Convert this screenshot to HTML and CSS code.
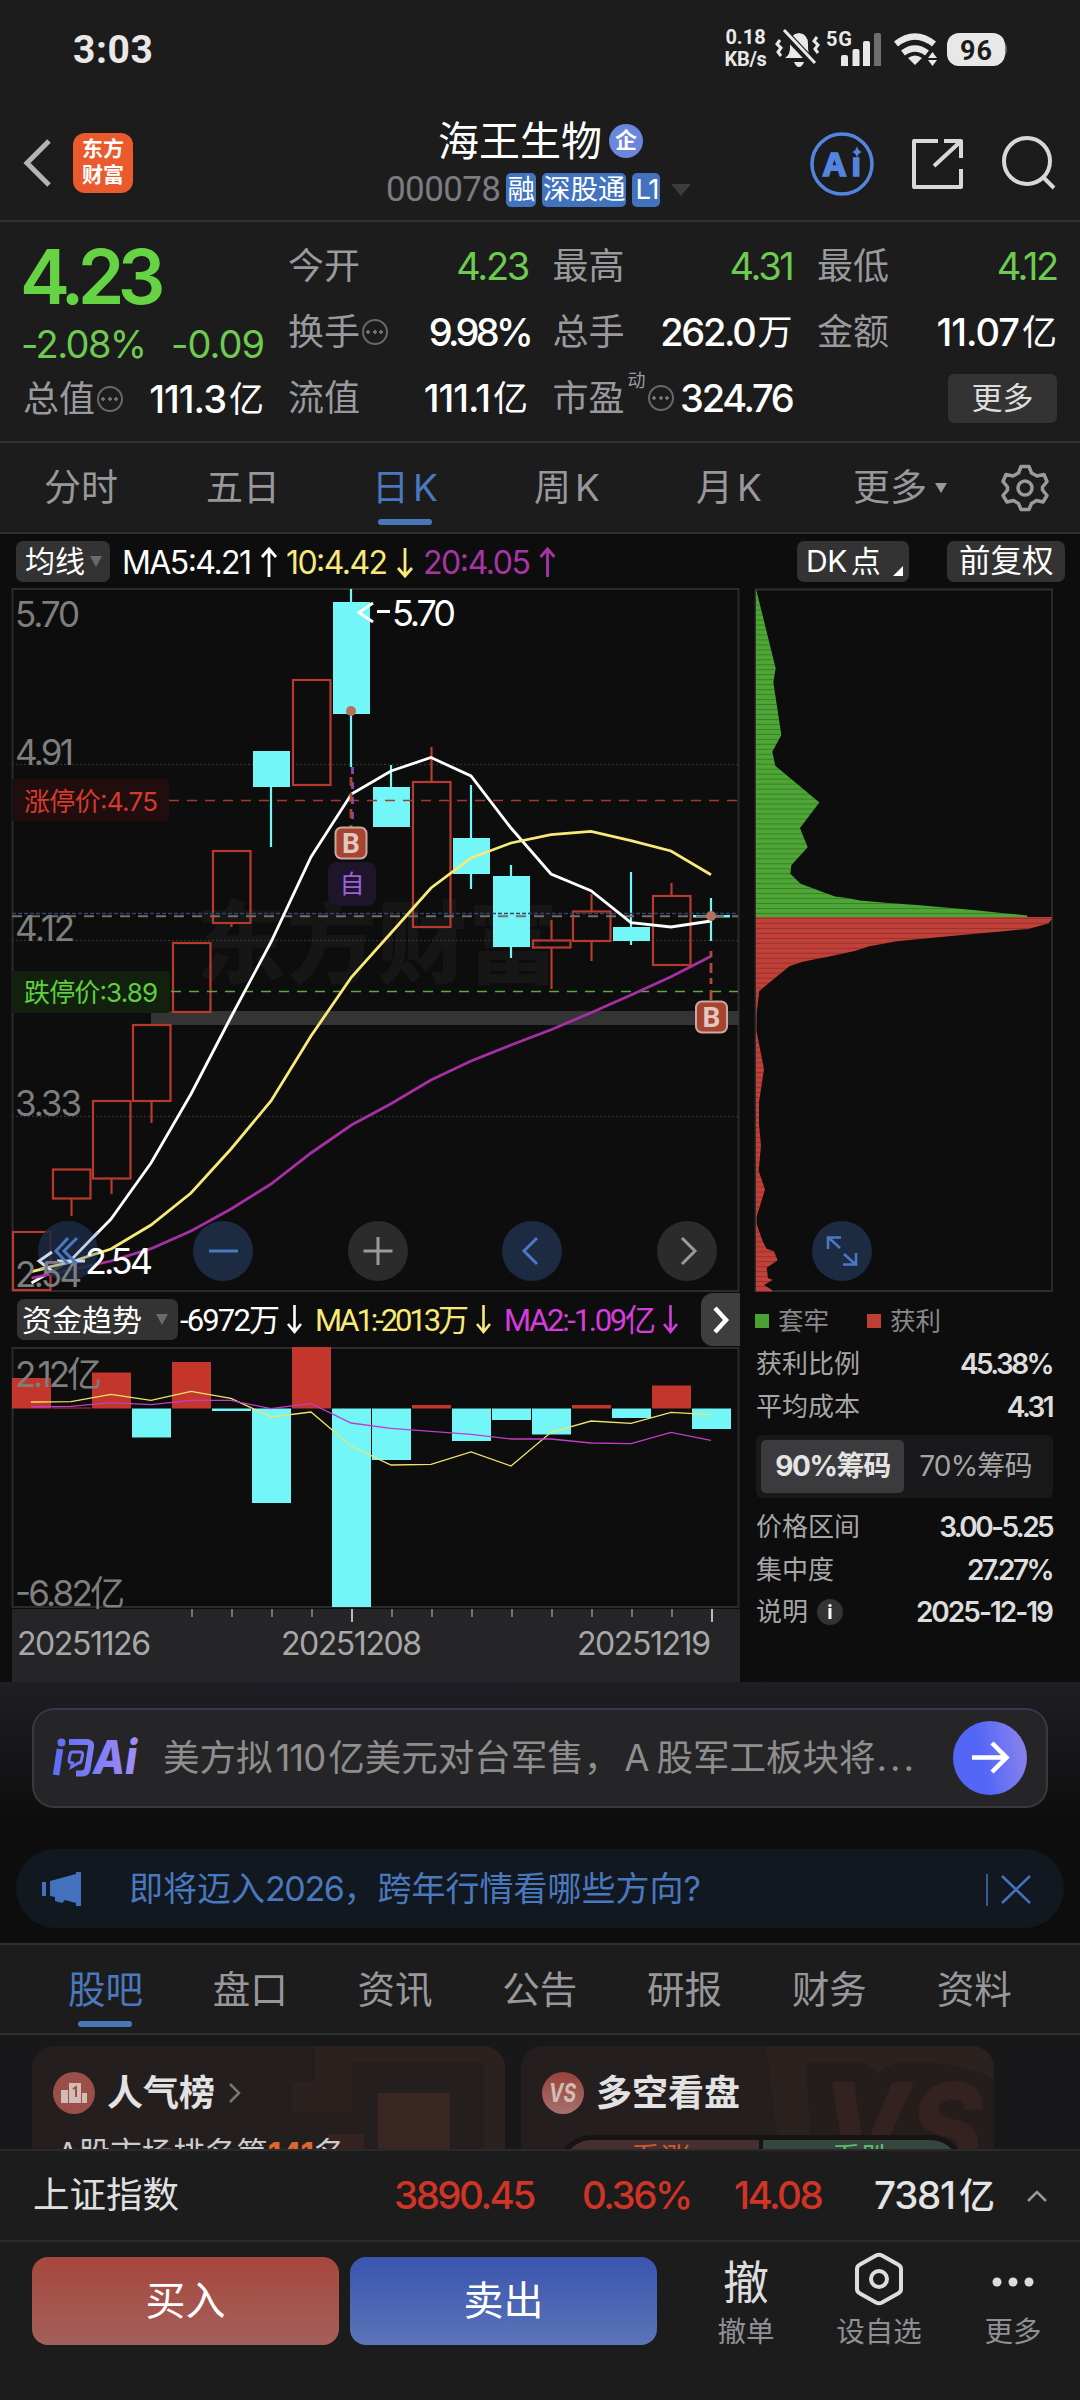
FILE: index.html
```html
<!DOCTYPE html>
<html lang="zh-CN">
<head>
<meta charset="utf-8">
<title>海王生物 000078</title>
<link rel="stylesheet" href="styles.css">
</head>
<body>
<div class="app">
  <div class="status">
    <span class="time">3:03</span>
    <span class="rate"><b>0.18</b><b>KB/s</b></span>
    <svg class="status-icons" width="290" height="44" viewBox="770 28 290 44">
      <path d="M785 58q5-3 5-10v-4q0-10 9-11q9 1 9 11v4q0 7 5 10z" fill="#e8e8e8"/>
      <path d="M794 62h10q-2 5-5 5t-5-5z" fill="#e8e8e8"/>
      <path d="M783 31L814 64" stroke="#1c1c1c" stroke-width="8"/>
      <path d="M784 30L815 63M780 40l-3 4 4 4-3 4 3 4M817 37l-3 4 4 4-3 4 3 4" stroke="#e8e8e8" stroke-width="3" fill="none"/>
      <text x="826" y="46" class="st5g" textLength="26">5G</text>
      <path d="M841 57a2 2 0 012-2h3a2 2 0 012 2v9h-7zM852.500 51a2 2 0 012-2h3a2 2 0 012 2v15h-7zM863 43a2 2 0 012-2h3a2 2 0 012 2v23h-7z" fill="#e8e8e8"/>
      <path d="M874 35a2 2 0 012-2h3a2 2 0 012 2v31h-7z" fill="#6f6f6f"/>
      <path d="M896 44q19-15 38 0" stroke="#e8e8e8" stroke-width="6.500" fill="none"/>
      <path d="M903 53q12-9 24 0" stroke="#e8e8e8" stroke-width="6.500" fill="none"/>
      <path d="M908 58q7-5 14 0l-7 7z" fill="#e8e8e8"/>
      <path d="M928 58l4.500-6 4.500 6zM928 60l4.500 6 4.500-6z" fill="#e8e8e8"/>
      <rect x="947" y="33" width="58" height="33" rx="12" fill="#e8e8e8"/>
      <path d="M1005 43q4 6 0 13z" fill="#777"/>
      <text x="960" y="60" class="batt" textLength="32">96</text>
    </svg>
  </div>

  <header class="head">
    <div class="head-left">
      <svg width="36" height="56" viewBox="20 135 36 56"><path d="M49 141L27 163l22 22" fill="none" stroke="#b4b4b4" stroke-width="5"/></svg>
      <div class="logo">东方<br>财富</div>
    </div>
    <div class="head-mid">
      <div class="name">海王生物<i class="qi">企</i></div>
      <div class="code"><span>000078</span><em>融</em><em>深股通</em><em>L1</em><i class="tri"></i></div>
    </div>
    <svg class="head-icons" width="260" height="72" viewBox="804 127 260 72" fill="none" stroke="#d8d8d8" stroke-width="4">
      <circle cx="842" cy="163" r="30" stroke="#5384df" stroke-width="3.500"/>
      <text x="823" y="175" class="ai" textLength="38">Aı</text>
      <path d="M857 145q1 5 5 6q-4 1-5 6q-1-5-5-6q4-1 5-6z" fill="#5384df" stroke="none"/>
      <path d="M938 140H914V186H961V168M944 140H961V157M934 165L960 141" stroke-linejoin="round"/>
      <circle cx="1027" cy="160" r="23"/><path d="M1043 176l11 11"/>
    </svg>
  </header>

  <section class="quote">
    <div class="q-left">
      <div class="price">4.23</div>
      <div class="chg"><span>-2.08%</span><span class="c2">-0.09</span></div>
      <div class="cell"><label>总值<i class="dots"></i></label><b class="wd">111.3<u>亿</u></b></div>
    </div>
    <div class="q-grid">
      <div class="cell"><label>今开</label><b class="g">4.23</b></div>
      <div class="cell"><label>最高</label><b class="g">4.31</b></div>
      <div class="cell"><label>最低</label><b class="g">4.12</b></div>
      <div class="cell"><label>换手<i class="dots"></i></label><b class="t">9.98%</b></div>
      <div class="cell"><label>总手</label><b>262.0<u>万</u></b></div>
      <div class="cell"><label>金额</label><b class="wd">11.07<u>亿</u></b></div>
      <div class="cell"><label>流值</label><b class="wd">111.1<u>亿</u></b></div>
      <div class="cell"><label>市盈<sup>动</sup><i class="dots"></i></label><b>324.76</b></div>
      <div class="cell end"><span class="more">更多</span></div>
    </div>
  </section>

  <nav class="ktabs">
    <span>分时</span><span>五日</span><span class="on">日<k>K</k></span><span>周<k>K</k></span><span>月<k>K</k></span><span class="mo">更多<i class="tri s"></i></span>
    <svg width="50" height="50" viewBox="-25 -25 50 50" fill="none" stroke="#9a9a9a" stroke-width="3.500" stroke-linejoin="round"><path d="M-4-21.500H4L6.500-15L12-12L19-13.500L22-6.500L17.500-1V2L22 7.500L18 14L11.500 12.500L6.500 15.500L4 21.500H-4L-6.500 15.500L-11.500 12.500L-18 14L-22 7.500L-17.500 2V-1L-22-6.500L-19-13.500L-12-12L-6.500-15Z"/><circle r="7"/></svg>
  </nav>

  <section class="charts">
    <div class="col-k">
      <div class="ma-row">
        <span class="btn">均线<i class="tri m"></i></span>
        <svg width="440" height="54" viewBox="120 534 440 54" fill="none" stroke-width="2.800">
          <text x="122" y="574" class="ma w" textLength="130">MA5:4.21</text><path d="M269 577V549M262 557l7-8 7 8" stroke="#fff"/>
          <text x="286" y="574" class="ma y" textLength="102">10:4.42</text><path d="M405 548V576M398 568l7 8 7-8" stroke="#f8ea78"/>
          <text x="423" y="574" class="ma p" textLength="108">20:4.05</text><path d="M547.500 577V549M540.500 557l7-8 7 8" stroke="#a835a8"/>
        </svg>
      </div>
      <svg class="kchart" width="740" height="704" viewBox="0 588 740 704">
        <text x="196" y="976" class="wm" textLength="362">东方财富</text>
        <path d="M12.500 1291V589H738.500V1291Z" fill="none" stroke="#2b2b2b" stroke-width="2"/>
        <path d="M12 764.500H738M12 940.500H738M12 1116.500H738" stroke="#303030" stroke-width="1.500" stroke-dasharray="2 2"/>
        <rect x="151" y="1011" width="588" height="14" fill="#343434"/>
        <g class="red-c">
          <path d="M31.500 1289v2M71.500 1199v17M111.500 1179v15M151.500 1101v22M231.500 923v4M431.500 782v-35M551.500 940v-20M551.500 948v41M591.500 911v-17M591.500 941v20M671.500 896v-13"/>
          <rect x="13" y="1232" width="37.500" height="58"/><rect x="53" y="1169.500" width="37.500" height="29"/><rect x="93" y="1101" width="37.500" height="77.500"/><rect x="133" y="1025" width="37.500" height="76"/><rect x="173" y="943" width="37.500" height="69"/><rect x="213" y="851" width="37.500" height="72"/><rect x="293" y="680" width="37.500" height="105"/><rect x="413" y="782" width="37.500" height="145"/><rect x="533" y="940.500" width="37.500" height="7"/><rect x="573" y="911.500" width="37.500" height="29.500"/><rect x="653" y="896" width="37.500" height="69"/>
        </g>
        <g class="cy-c">
          <path d="M271 787v60M351 589v178M391 765v30M471 785v104M511 865v93M631 872v73M711 898v43"/>
          <rect x="253" y="751" width="37" height="36"/><rect x="333" y="602" width="37" height="112"/><rect x="373" y="787" width="37" height="40"/><rect x="453" y="838" width="37" height="36"/><rect x="493" y="876" width="37" height="71"/><rect x="613" y="927" width="37" height="14"/><rect x="693" y="915" width="37" height="2.500"/>
        </g>
        <path d="M12 913.500H738" stroke="#2f4668" stroke-width="1.500" stroke-dasharray="4 2"/>
        <path d="M12 916.300H738" stroke="#7b6b60" stroke-width="2" stroke-dasharray="10 8"/>
        <path d="M169 800.500H738" stroke="#a83a2f" stroke-width="1.500" stroke-dasharray="10 8"/>
        <path d="M171 991.500H738" stroke="#5aa83e" stroke-width="1.500" stroke-dasharray="10 8"/>
        <text x="15" y="627" class="ax" textLength="65">5.70</text><text x="15" y="765" class="ax" textLength="59">4.91</text><text x="15" y="941" class="ax" textLength="60">4.12</text><text x="15" y="1116" class="ax" textLength="67">3.33</text>
        <path d="M12 779h153q4 0 4 4v34q0 4-4 4H12z" fill="#200e0e"/><text x="24" y="811" class="lim" fill="#d63a2c" textLength="134">涨停价:4.75</text>
        <path d="M12 971h154q4 0 4 4v34q0 4-4 4H12z" fill="#12200e"/><text x="24" y="1002" class="lim" fill="#5fcf3f" textLength="134">跌停价:3.89</text>
        <g fill="none" stroke-width="2.800">
          <polyline stroke="#fff" points="31.500,1283 71,1260 111,1219 151,1163 191,1094 231,1017 271,942 311,857 351.500,794 391,771 431,757.500 471,776 511,828 551,874 591,890.700 631,922.700 671,927 711,921"/>
          <polyline stroke="#f8ea78" points="31.500,1271.700 71,1262 111,1249 151,1225 191,1193 231,1149 271,1101 311,1036 351.500,977 391,933 431,888 471,858 511,843 551,834.700 591,831.300 631,840.700 671,851 711,874.700"/>
          <polyline stroke="#a62fa6" points="31.500,1278 71,1270 111,1261 151,1248.700 191,1231 231,1209 271,1184 311,1153 351.500,1125 391,1103.700 431,1080 471,1061 511,1045 551,1029.700 591,1012.700 631,995 671,976.700 711,956.300"/>
          <path d="M352.500 767V827" stroke="#8848b8" stroke-dasharray="7 8"/><path d="M351 777V827" stroke="#a84432" stroke-dasharray="9 7"/><path d="M711 951V1001" stroke="#b8493a" stroke-dasharray="6 6 10 5"/>
        </g>
        <circle cx="351" cy="711" r="5" fill="#b5705f"/><circle cx="711" cy="916" r="5" fill="#b5705f"/>
        <rect x="335.500" y="827.500" width="31" height="31" rx="6" fill="#a8432f" stroke="#c7aaa2" stroke-width="2"/><text x="351" y="853" class="b">B</text>
        <rect x="696" y="1001.500" width="31" height="31" rx="6" fill="#a8432f" stroke="#c7aaa2" stroke-width="2"/><text x="711.500" y="1027" class="b">B</text>
        <rect x="328" y="862" width="48" height="44" rx="9" fill="#1e152a"/><text x="352" y="893" class="zi">自</text>
        <path d="M373 603L359 612.500L373 622M377 611.500h13" fill="none" stroke="#fff" stroke-width="3"/><text x="392" y="626" class="an" textLength="64">5.70</text>
        <g fill-opacity=".86"><circle cx="68" cy="1251" r="30" fill="#1c2a42"/></g><circle cx="223" cy="1251" r="30" fill="#1c2a42"/><circle cx="378" cy="1251" r="30" fill="#2b2b2b"/><circle cx="532" cy="1251" r="30" fill="#1c2a42"/><circle cx="687" cy="1251" r="30" fill="#2b2b2b"/>
        <g stroke-width="2.600" fill="none"><path d="M71 1260L98 1232" stroke="#c3d0e6"/><path d="M40 1269L71 1262L98 1253" stroke="#b9c08e"/></g>
        <path d="M52 1252L39 1261L52 1271M57 1261h28" fill="none" stroke="#cdd8ee" stroke-width="3"/>
        <text x="15" y="1287" class="ax" textLength="67">2.54</text><text x="85" y="1274" class="an" textLength="68">2.54</text>
        <g fill="none" stroke="#4a78c4" stroke-width="3"><path d="M68 1238L56 1251L68 1264M77 1238L64 1251L77 1264M209 1251H238M537 1238L524 1251L537 1264"/></g>
        <g fill="none" stroke="#9a9a9a" stroke-width="3"><path d="M363.500 1251h29M378 1237v28M682 1238L695 1251L682 1264"/></g>
      </svg>
      <div class="fund-row">
        <span class="btn">资金趋势<i class="tri m"></i></span>
        <svg width="520" height="56" viewBox="180 1292 520 56" fill="none" stroke-width="2.600">
          <text x="180" y="1331" class="fd w" textLength="100">-6972万</text><path d="M294.500 1305V1332M288 1324l6.500 8 6.500-8" stroke="#fff"/>
          <text x="315" y="1331" class="fd y" textLength="154">MA1:-2013万</text><path d="M483.500 1305V1332M477 1324l6.500 8 6.500-8" stroke="#f8ea78"/>
          <text x="504" y="1331" class="fd m" textLength="152">MA2:-1.09亿</text><path d="M670.500 1305V1332M664 1324l6.500 8 6.500-8" stroke="#d43ddb"/>
        </svg>
        <span class="next"><svg width="20" height="30" viewBox="0 0 20 30"><path d="M4 3L15 15L4 27" fill="none" stroke="#fff" stroke-width="4.500"/></svg></span>
      </div>
      <svg class="fchart" width="740" height="335" viewBox="0 1347 740 335">
        <path d="M12.500 1607V1348H738.500V1607Z" fill="none" stroke="#2b2b2b" stroke-width="2"/>
        <path fill="#c4352b" d="M12 1378h39v30.500h-39zM52 1407.500h39v1h-39zM92 1372.500h39v36h-39zM172 1362h39v46.500h-39zM292 1347h39v61.500h-39zM412 1405h39v3.500h-39zM572 1405h39v3.500h-39zM652 1385.500h39v23h-39z"/>
        <path fill="#72f6f8" d="M132 1408.500h39v29h-39zM212 1408.500h39v2.500h-39zM252 1408.500h39v94.500h-39zM332 1408.500h39v198.500h-39zM372 1408.500h39v51.500h-39zM452 1408.500h39v32.500h-39zM492 1408.500h39v11.500h-39zM532 1408.500h39v26h-39zM612 1408.500h39v9.500h-39zM692 1408.500h39v20.500h-39z"/>
        <text x="15" y="1387" class="ax" textLength="87">2.12亿</text><text x="15" y="1606" class="ax" textLength="110">-6.82亿</text>
        <polyline fill="none" stroke="#efe46a" stroke-width="1.300" points="31,1402 71,1401.700 111,1394.300 151,1400.300 191,1391.300 231,1398.300 271,1417 311,1412 351,1446 391,1465 431,1464.300 471,1452 511,1466 551,1432.300 591,1421 631,1423.300 671,1412.300 711,1414.700"/>
        <polyline fill="none" stroke="#c23cc9" stroke-width="1.300" points="31,1407 71,1406.300 111,1402.700 151,1404.700 191,1400.300 231,1400.300 271,1408.700 311,1403.300 351,1423 391,1428.300 431,1431.300 471,1434.300 511,1439 551,1439 591,1443 631,1443.700 671,1432.300 711,1440.300"/>
        <rect x="12" y="1609" width="728" height="73" fill="#252527"/>
        <path d="M192 1609v8M232 1609v8M272 1609v8M312 1609v8M392 1609v8M432 1609v8M472 1609v8M512 1609v8M552 1609v8M592 1609v8M632 1609v8M672 1609v8" stroke="#8c8c8c" stroke-width="1.500"/><path d="M352 1609v13M712 1609v13" stroke="#bbb" stroke-width="2"/>
        <text x="17" y="1655" class="dt" textLength="134">20251126</text><text x="281" y="1655" class="dt" textLength="141">20251208</text><text x="577" y="1655" class="dt" textLength="134">20251219</text>
      </svg>
    </div>
    <div class="col-chip">
      <div class="dk-row"><span class="btn dk">DK<u>点</u><i class="corner"></i></span><span class="btn fq">前复权</span></div>
      <svg width="340" height="704" viewBox="740 588 340 704">
        <defs><pattern id="st" width="3" height="10" patternUnits="userSpaceOnUse"><path d="M0 1H3" stroke="#000" stroke-opacity=".28" stroke-width="2"/></pattern>
        <path id="gr" d="M48 138L107 298L100 326L124 432L97 466L106 494L238 568L180 619L203 658L154 694L151 711L182 731L240 746L285 757L322 760L360 765L445 770L530 774L615 779L700 784L785 790L862 795V799H48Z"/>
        <path id="rd" d="M48 798H935V803L925 811L865 822L785 827L706 832L627 837L548 842L470 847L430 852L388 857L347 866L306 872L265 878L225 883L188 888L148 897L58 947L50 990L49 1025L72 1104L57 1170V1215L63 1258L56 1308L75 1346L50 1400V1415L68 1450L80 1465L102 1470L113 1488L80 1503L84 1524L98 1528L72 1538L96 1548V1551H48Z"/></defs>
        <path d="M755.500 1291V589.500H1052V1291Z" fill="none" stroke="#2e2e2e" stroke-width="1.800"/>
        <g transform="translate(740 520) scale(.33333 .49744)"><use href="#gr" fill="#4ea636"/><use href="#rd" fill="#c1413a"/><use href="#gr" fill="url(#st)"/><use href="#rd" fill="url(#st)"/></g>
        <circle cx="842" cy="1251" r="30" fill="#1c2a42"/>
        <path d="M840 1248L829 1238M828 1249V1237.500H841M844 1254L855 1264M843 1264.500H856V1253" fill="none" stroke="#4a78c4" stroke-width="2.600"/>
      </svg>
      <div class="chip">
        <div class="lg"><i></i>套牢<i class="r"></i>获利</div>
        <div class="row"><span>获利比例</span><b>45.38%</b></div>
        <div class="row"><span>平均成本</span><b>4.31</b></div>
        <div class="seg"><span class="on">90%筹码</span><span>70%筹码</span></div>
        <div class="row"><span>价格区间</span><b>3.00-5.25</b></div>
        <div class="row"><span>集中度</span><b>27.27%</b></div>
        <div class="row"><span>说明<i class="info">i</i></span><b class="date">2025-12-19</b></div>
      </div>
    </div>
  </section>

  <section class="ask">
    <div class="askbox">
      <svg width="88" height="44" viewBox="52 1737 88 44">
        <defs><linearGradient id="ag" x1="52" x2="140" y1="0" y2="0" gradientUnits="userSpaceOnUse"><stop offset="0" stop-color="#5a6cf5"/><stop offset="1" stop-color="#a58ef5"/></linearGradient></defs>
        <g fill="none" stroke="url(#ag)" stroke-width="6"><path d="M60 1750L56 1776" stroke-width="6.500"/><path d="M69 1743H86q6 0 5 5L87.500 1770q-1 4.500-6 4.500H76"/><path d="M71 1753h9q3 0 2.500 3l-1 5q-.5 3-3 3l-7 4 1-4q-4 0-3.500-3l1-5q.5-3 2-3z" stroke-width="3"/></g><circle cx="61.500" cy="1743.500" r="4" fill="url(#ag)"/>
        <text x="93" y="1775" class="wen" textLength="44" lengthAdjust="spacingAndGlyphs" fill="url(#ag)">Ai</text>
      </svg>
      <span class="q">美方拟<l>110</l>亿美元对台军售，<l class="a">A</l>股军工板块将<l class="e">...</l></span>
      <span class="go"><svg width="40" height="40" viewBox="0 0 40 40"><path d="M2 19.500H36M22 5L36.500 19.500L22 34" fill="none" stroke="#fff" stroke-width="4.500"/></svg></span>
    </div>
    <div class="tip">
      <svg width="42" height="36" viewBox="41 1871 42 36" fill="#4272bd"><path d="M42 1882h4v14h-4zM50 1881L76 1874V1872H81V1906H76V1903L65 1900L62 1903L55 1901V1897L50 1896Z"/></svg>
      <span>即将迈入<l>2026</l>，跨年行情看哪些方向?</span>
      <svg width="50" height="34" viewBox="984 1871 50 34" fill="none" stroke="#4272bd"><path d="M987 1873v32" stroke-width="1.500"/><path d="M1002 1875L1030 1902M1030 1875L1002 1902" stroke-width="2.600"/></svg>
    </div>
  </section>

  <nav class="tabs"><span class="on">股吧</span><span>盘口</span><span>资讯</span><span>公告</span><span>研报</span><span>财务</span><span>资料</span></nav>

  <section class="cards">
    <div class="card">
      <svg class="bg" width="473" height="103" viewBox="0 0 473 103"><path d="M283 0H473V103H452V16H320V66H260V36H283Z" fill="#2b211f"/><path d="M346 47H418V103H346Z" fill="#3a2623"/><path d="M296 88h36v15h-36z" fill="#33221f"/></svg>
      <div class="ct"><svg width="42" height="42" viewBox="0 0 42 42"><circle cx="21" cy="21" r="21" fill="#9c4f49"/><path d="M8 18h7v13H8zM16 11h12v20H16zM29 21h5v10h-5z" fill="#d2bcb8"/><path d="M20 17l3-2v10" fill="none" stroke="#9c4f49" stroke-width="2"/></svg><b>人气榜</b><svg width="16" height="24" viewBox="0 0 16 24"><path d="M3 3l9 9-9 9" fill="none" stroke="#777" stroke-width="2.500"/></svg></div>
      <p><l>A</l>股市场排名第<em>141</em>名</p>
    </div>
    <div class="card">
      <svg class="bg" width="473" height="103" viewBox="0 0 473 103"><path d="M245 0H473V103H258Z" fill="#2b211f"/><path d="M285 16H344L357 27Q372 14 400 16Q450 18 473 34V103H290Z" fill="#251c1c"/><text x="300" y="128" class="vs" textLength="162" lengthAdjust="spacingAndGlyphs">VS</text></svg>
      <div class="ct"><svg width="42" height="42" viewBox="0 0 42 42"><defs><linearGradient id="vg" x2="0" y2="1"><stop stop-color="#97423b"/><stop offset="1" stop-color="#a8716c"/></linearGradient></defs><circle cx="21" cy="21" r="21" fill="url(#vg)"/><text x="7" y="30" class="vss" textLength="27" lengthAdjust="spacingAndGlyphs">VS</text></svg><b>多空看盘</b></div>
      <div class="pill"><span>看涨</span><span>看跌</span></div>
    </div>
  </section>

  <div class="index"><span>上证指数</span><b class="r1">3890.45</b><b class="r2">0.36%</b><b class="r3">14.08</b><b class="wv">7381<u>亿</u></b><svg width="22" height="14" viewBox="0 0 22 14"><path d="M2 12L11 3L20 12" fill="none" stroke="#999" stroke-width="2.500"/></svg></div>
  <footer class="foot">
    <span class="buy">买入</span><span class="sell">卖出</span>
    <div class="act a1"><i>撤</i><s>撤单</s></div>
    <div class="act a2"><svg width="52" height="54" viewBox="-26 -27 52 54" fill="none" stroke="#ddd" stroke-width="4"><path d="M-3-23.500Q0-25 3-23.500L19-14.500Q22-13 22-10V10Q22 13 19 14.500L3 23.500Q0 25-3 23.500L-19 14.500Q-22 13-22 10V-10Q-22-13-19-14.500Z"/><circle r="8"/></svg><s>设自选</s></div>
    <div class="act a3"><svg width="52" height="54" viewBox="-26 -27 52 54" fill="#ddd"><circle cx="-16" cy="3" r="4.500"/><circle cy="3" r="4.500"/><circle cx="16" cy="3" r="4.500"/></svg><s>更多</s></div>
  </footer>
</div>
</body>
</html>
```
FILE: styles.css
```css
* { box-sizing: border-box; }
body { margin: 0; background: #0d0d0d; }
.app { width: 1080px; height: 2400px; overflow: hidden; display: flex; flex-direction: column; background: #1c1c1c; color: #fff; font-family: Inter, "Noto Sans CJK SC", sans-serif; line-height: 1; }
i, em, s, u { font-style: normal; text-decoration: none; }
svg { display: block; flex: none; }
.app > * { flex: none; }

.status { height: 100px; display: flex; align-items: center; padding-left: 73px; color: #e8e8e8; }
.time { width: 648px; font: 700 39px/1 Roboto; letter-spacing: .6px; }
.rate { width: 49px; display: flex; flex-direction: column; align-items: center; gap: 2px; margin-top: -4px; }
.rate b { font: 700 20px/20px Roboto; }
.rate b:last-child { letter-spacing: -.3px; }
.st5g { font: 700 20px Roboto; fill: #e8e8e8; }
.batt { font: 700 27px Roboto; fill: #1c1c1c; }

.head { height: 122px; padding: 8px 16px 0 20px; display: flex; align-items: center; border-bottom: 2px solid #303030; }
.head-left { width: 366px; display: flex; align-items: center; gap: 17px; margin-top: -3px; }
.logo { width: 60px; height: 60px; border-radius: 12px; background: #ea5a2c; font-size: 21px; font-weight: 700; line-height: 26px; text-align: center; padding-top: 3px; }
.head-mid { width: 310px; margin-top: -8px; }
.head-icons { margin-left: auto; }
.name { display: flex; align-items: center; gap: 7px; font-size: 41px; line-height: 56px; padding-left: 52px; }
.qi { width: 34px; height: 34px; border-radius: 50%; background: #6a86dd; font-size: 22px; font-weight: 700; line-height: 33px; text-align: center; }
.code { display: flex; align-items: center; gap: 6px; height: 36px; margin-top: 3px; white-space: nowrap; }
.code > * { flex: none; }
.code span { font: 35px/36px Roboto; color: #7c7c80; letter-spacing: -.6px; }
.code em { height: 34px; border-radius: 5px; background: #4273bf; font-size: 27.500px; line-height: 32px; padding: 0 1px; }
.code em:nth-of-type(3) { letter-spacing: -1.500px; padding: 0 2px 0 3px; }
.tri { width: 0; height: 0; border: 10px solid transparent; border-top: 12px solid #3c3c3c; border-bottom: 0; margin-left: 5px; }
.tri.s { border-width: 10px 6.500px 0; border-top-color: #9a9a9a; margin-left: 8px; }
.tri.m { border-width: 11px 6px 0; border-top-color: #6a6a6a; margin-left: 5px; }
.ai { font: 700 33px "Noto Sans"; fill: #5384df; stroke: #5384df; stroke-width: 1.500; }

.quote { height: 221px; display: flex; padding: 11px 22px 0 23px; border-bottom: 2px solid #303030; }
.q-left { width: 265px; }
.price { height: 88px; font-size: 75px; font-weight: 600; line-height: 88px; color: #66d344; letter-spacing: -6.800px; margin-left: -3px; }
.chg { height: 45px; width: 243px; display: flex; justify-content: space-between; color: #6ccb50; font-size: 38px; line-height: 46px; letter-spacing: -1.600px; margin-left: -2px; }
.chg .c2 { letter-spacing: -1px; }
.q-left .cell { height: 66px; width: 241px; }
.q-grid { display: grid; grid-template-columns: 240px 240px 240px; column-gap: 24.500px; grid-template-rows: 66px 66px 66px; }
.cell { display: flex; align-items: center; justify-content: space-between; }
.cell label { display: flex; align-items: center; gap: 2px; font-size: 36px; color: #9a9a9e; }
.cell label sup { font-size: 18px; align-self: flex-start; margin: -8px 0 0 1px; line-height: 1; }
.cell b { display: flex; align-items: center; font-weight: 500; font-size: 38px; letter-spacing: -2.300px; }
.cell b.t { letter-spacing: -3.700px; margin-right: -2px; }
.cell b.wd { letter-spacing: -1px; }
.cell b.g { color: #6ccb50; font-weight: 400; }
.cell u { font-size: 35px; font-weight: 400; letter-spacing: 0; margin-left: 3px; }
.cell.end { justify-content: flex-end; }
.more { width: 109px; height: 49px; border-radius: 6px; background: #333; color: #ddd; font-size: 31px; line-height: 47px; text-align: center; }
.dots { width: 26px; height: 26px; border: 2.500px solid #68686a; border-radius: 50%; background: radial-gradient(circle, #77777a 1.500px, transparent 2px) 50% 50% / 6px 6px no-repeat, radial-gradient(circle, #77777a 1.500px, transparent 2px) 1px 50% / 6px 6px no-repeat, radial-gradient(circle, #77777a 1.500px, transparent 2px) 14px 50% / 6px 6px no-repeat; }

.ktabs { height: 91px; display: flex; align-items: center; border-bottom: 2px solid #303030; font-size: 37px; color: #98989c; }
.ktabs span { width: 162px; display: flex; justify-content: center; align-items: center; height: 89px; position: relative; }
.ktabs span.mo { width: 180px; }
.ktabs svg { margin-left: 10px; }
.ktabs k { margin-left: 4px; }
.on { color: #4a78bf; }
.ktabs .on::after, .tabs .on::after { content: ""; position: absolute; bottom: 7px; left: 50%; margin-left: -27px; width: 54px; height: 6px; border-radius: 3px; background: #4a76bc; }

.charts { height: 1148px; background: #0d0d0d; display: flex; }
.col-k { width: 740px; }
.col-chip { width: 340px; }
.ma-row { height: 54px; display: flex; align-items: center; padding-left: 16px; }
.btn { display: flex; align-items: center; background: #333; border-radius: 7px; height: 41px; font-size: 30px; padding-left: 9px; }
.ma-row .btn { width: 94px; margin-right: 10px; }
.ma { font: 32px Inter; }
.w { fill: #fff; } .y { fill: #f8ea78; } .p { fill: #a835a8; } .m { fill: #d43ddb; }
.wm { font: 900 90px "Noto Sans CJK SC"; fill: #161616; }
.red-c { fill: none; stroke: #b63a2e; stroke-width: 2.200; }
.cy-c path { stroke: #72f6f8; stroke-width: 2.200; }
.cy-c rect { fill: #72f6f8; }
.ax { font: 35px Inter, "Noto Sans CJK SC"; fill: #7e7e7e; }
.an { font: 36px Inter; fill: #fff; }
.lim { font: 26px Inter, "Noto Sans CJK SC"; }
.b { font: 700 28px Roboto; fill: #e0c8c2; text-anchor: middle; }
.zi { font: 25px "Noto Sans CJK SC"; fill: #9a62dd; text-anchor: middle; }
.fund-row { height: 55px; display: flex; align-items: center; padding-left: 17px; }
.fund-row .btn { width: 161px; padding-left: 5px; margin-right: 2px; }
.fund-row .tri { margin-left: 14px; }
.fd { font: 31px Roboto, "Noto Sans CJK SC"; }
.next { width: 39px; height: 53px; margin-left: 1px; border-radius: 12px 0 0 12px; background: #3e3e3e; display: flex; align-items: center; justify-content: center; }
.dt { font: 32px Inter; fill: #a8a8a8; }
.dk-row { height: 54px; display: flex; align-items: center; padding-left: 57px; gap: 38px; }
.dk { width: 112px; position: relative; font-size: 30px; letter-spacing: -.5px; }
.dk u { margin-left: 4px; }
.fq { width: 118px; padding-left: 12px; font-size: 31.500px; }
.corner { position: absolute; right: 6px; bottom: 6px; border: 5.500px solid transparent; border-right-color: #fff; border-bottom-color: #fff; }

.chip { padding: 7px 27px 0 15px; color: #a6a6a6; font-size: 26px; }
.lg { height: 44px; display: flex; align-items: center; font-size: 25.500px; color: #88888c; }
.lg i { width: 14px; height: 14px; background: #4ba033; margin-right: 9px; }
.lg i.r { background: #bd3f36; margin-left: 38px; }
.row { height: 42.500px; display: flex; align-items: center; justify-content: space-between; padding-left: 1px; }
.row span { display: flex; align-items: center; }
.row b { font-size: 28px; font-weight: 600; color: #ddd; letter-spacing: -2.600px; margin-right: 1px; }
.row b:not(:empty).date { letter-spacing: -2px; }
.seg { height: 63px; margin: 7px 0 8px 1px; border-radius: 6px; background: #19191b; padding: 5px; display: flex; font-size: 28px; }
.seg span { width: 143px; height: 53px; line-height: 53px; text-align: center; border-radius: 5px; letter-spacing: -.8px; white-space: nowrap; }
.seg .on { background: #3b3b3d; color: #e4e4e4; font-weight: 700; letter-spacing: -1.400px; }
.info { width: 26px; height: 26px; border-radius: 50%; background: #333; color: #fff; font: 700 20px/26px Roboto; text-align: center; margin-left: 9px; }

.ask { height: 261px; background: linear-gradient(#1f1e24, #0d0d0d 140px); padding: 26px 16px 0; }
.askbox { height: 100px; margin: 0 16px; border: 2px solid #3a3a3d; border-top-color: #3a3654; border-radius: 22px; background: #252527; display: flex; align-items: center; padding-left: 18px; }
.wen { font: italic 800 47px Inter; }
.q { width: 758px; margin-left: 23px; font-size: 36.500px; color: #8e8e8e; white-space: nowrap; }
.q l { letter-spacing: -1px; margin: 0 3px; }
.q .a { margin: 0 8px 0 4px; }
.q .e { letter-spacing: 3px; margin: 0 0 0 1px; }
.go { width: 74px; height: 74px; border-radius: 50%; background: linear-gradient(80deg, #5366f6 40%, #9086ee); display: flex; align-items: center; justify-content: center; margin-left: 32px; }
.tip { height: 79px; margin-top: 41px; border-radius: 40px; background: #121820; display: flex; align-items: center; padding: 0 30px 0 25px; color: #4a78bf; font-size: 34px; }
.tip span { flex: 1; margin-left: 46px; }
.tip l { letter-spacing: -1.400px; }

.tabs { height: 92px; border-top: 2px solid #303030; border-bottom: 2px solid #303030; display: flex; padding-left: 33px; font-size: 37.500px; color: #98989c; }
.tabs span { width: 144.800px; height: 88px; line-height: 89px; text-align: center; position: relative; }
.tabs .on { color: #4a78bf; }
.tabs .on::after { bottom: 6px; }

.cards { height: 114px; background: #18181b; display: flex; gap: 16px; padding: 11px 0 0 32px; overflow: hidden; }
.card { width: 473px; height: 103px; border-radius: 22px 22px 0 0; background: #251e1e; position: relative; overflow: hidden; }
.card .bg { position: absolute; left: 0; top: 0; }
.ct { display: flex; align-items: center; height: 94px; padding-left: 21px; position: relative; }
.ct b { font-size: 36px; font-weight: 700; color: #e2e2e2; margin: 0 12px 0 12px; }
.card p { position: relative; margin: -2px 0 0 25px; font-size: 31.500px; line-height: 32px; color: #ccc; }
.card p em { color: #e0662f; font-weight: 700; letter-spacing: -.5px; }
.vs { font: italic 800 126px Inter; fill: #342221; }
.vss { font: italic 700 26px Inter; fill: #d2bcb8; }
.pill { position: relative; width: 408px; height: 70px; margin: -5px 0 0 36px; border: 5px solid #181315; border-radius: 35px; overflow: hidden; display: flex; font-size: 30px; }
.pill span { flex: 1; padding-top: 3px; text-align: center; background: #46302f; color: #d0592c; }
.pill span + span { background: #35463c; color: #5fb873; border-left: 4px solid #181315; }

.index { height: 93px; border-top: 2px solid #2a2a2a; border-bottom: 2px solid #2a2a2a; display: flex; align-items: center; padding-left: 33px; font-size: 36.500px; color: #e0e0e0; background: #1c1c1c; }
.index span { width: 361px; }
.index b { font-weight: 500; font-size: 38.500px; color: #cf3426; letter-spacing: -2.500px; }
.index u { font-size: 36px; letter-spacing: 0; margin-left: 4px; }
.index .r1 { width: 188px; } .index .r2 { width: 152px; } .index .r3 { width: 140px; }
.index .wv { color: #e4e4e4; width: 152px; display: flex; align-items: center; letter-spacing: -1.200px; }
.foot { height: 158px; display: flex; padding: 15px 0 0 32px; background: #1c1c1c; }
.buy, .sell { width: 307px; height: 88px; border-radius: 16px; font-size: 40px; line-height: 87px; text-align: center; background: linear-gradient(#a6473e, #a3605a); }
.sell { margin-left: 11px; background: linear-gradient(#3955ae, #5c74b8); }
.act { width: 120px; display: flex; flex-direction: column; align-items: center; color: #ddd; }
.act i { font-size: 46px; height: 54px; line-height: 50px; margin-bottom: 5px; }
.act svg { margin: -5px 0 10px; }
.act s { font-size: 28.500px; color: #909094; line-height: 32px; }
.a1 { margin-left: 29px; } .a2 { margin-left: 13px; } .a3 { margin-left: 14px; }
```
